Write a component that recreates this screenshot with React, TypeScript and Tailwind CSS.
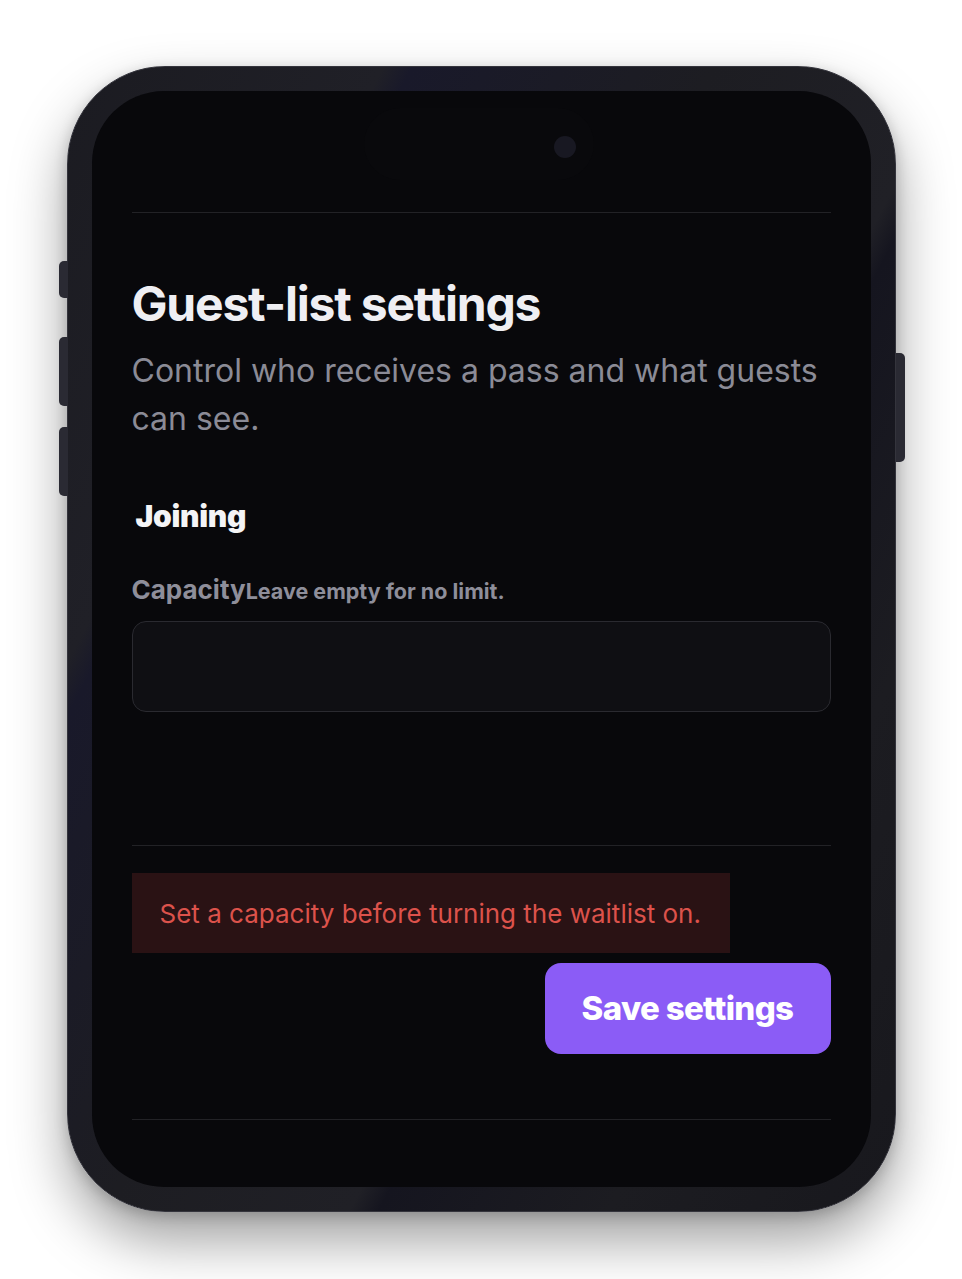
import React from "react";

export default function App() {
  return (
    <div className="min-h-screen bg-white flex justify-center pt-[66px] pb-[67px] font-['Inter','Liberation_Sans',sans-serif]">
      <div className="relative w-[829px] h-[1146px] rounded-[98px] p-[24px] border border-[#34343c] bg-[linear-gradient(118deg,#1b1b21_0%,#202027_22%,#19192a_24%,#1d1d22_45%,#202026_62%,#15151f_64%,#1c1c21_80%,#18181d_100%)] shadow-[0_28px_55px_rgba(0,0,0,0.38),0_4px_14px_rgba(0,0,0,0.18)]">
        {/* side buttons */}
        <div className="absolute left-[-9px] top-[194px] w-[9px] h-[37px] rounded-l-[5px] bg-[#2a2a33]" />
        <div className="absolute left-[-9px] top-[270px] w-[9px] h-[69px] rounded-l-[5px] bg-[#2a2a33]" />
        <div className="absolute left-[-9px] top-[360px] w-[9px] h-[69px] rounded-l-[5px] bg-[#2a2a33]" />
        <div className="absolute right-[-10px] top-[286px] w-[9px] h-[109px] rounded-r-[5px] bg-[#2a2a33]" />

        <div className="h-full rounded-[72px] bg-[#08080b] overflow-hidden px-10 flex flex-col">
          <div className="relative h-[121px] shrink-0">
            <div className="absolute left-[232px] top-[17px] w-[230px] h-[72px] rounded-full bg-[#09090c]" />
            <div className="absolute left-[422px] top-[45px] w-[22px] h-[22px] rounded-full bg-[#181822]" />
          </div>
          <div className="h-px bg-[#222226] shrink-0" />

          <h1 className="mt-[62px] text-[48px] leading-[58px] font-bold tracking-[-0.025em] text-[#efeff3]">
            Guest-list settings
          </h1>
          <p className="mt-[14px] text-[32px] leading-[48px] text-[#8b8b96]">
            Control who receives a pass and what guests can see.
          </p>

          <h2 className="mt-[55px] pl-1 text-[30px] leading-[36px] font-black tracking-[-0.01em] text-[#f4f4f6]">
            Joining
          </h2>

          <div className="mt-[40px] flex items-baseline text-[#8e8e9a] font-bold">
            <span className="text-[26px] leading-[32px]">Capacity</span>
            <span className="text-[21.5px] leading-[32px]">Leave empty for no limit.</span>
          </div>

          <div className="mt-[14px] h-[91px] rounded-[14px] border border-[#2a2a30] bg-[#0f0f13] shrink-0" />

          <div className="mt-[133px] h-px bg-[#222226] shrink-0" />

          <div className="mt-[27px] w-[598px] h-[80px] px-[28px] flex items-center bg-[#2a1214] text-[26px] text-[#dc524b] shrink-0">
            Set a capacity before turning the waitlist on.
          </div>

          <button className="mt-[10px] self-end w-[286px] h-[91px] rounded-[16px] bg-[#8b5cf6] text-white text-[33px] font-extrabold tracking-[-0.02em] shrink-0">
            Save settings
          </button>

          <div className="mt-[65px] h-px bg-[#222226] shrink-0" />
        </div>
      </div>
    </div>
  );
}
